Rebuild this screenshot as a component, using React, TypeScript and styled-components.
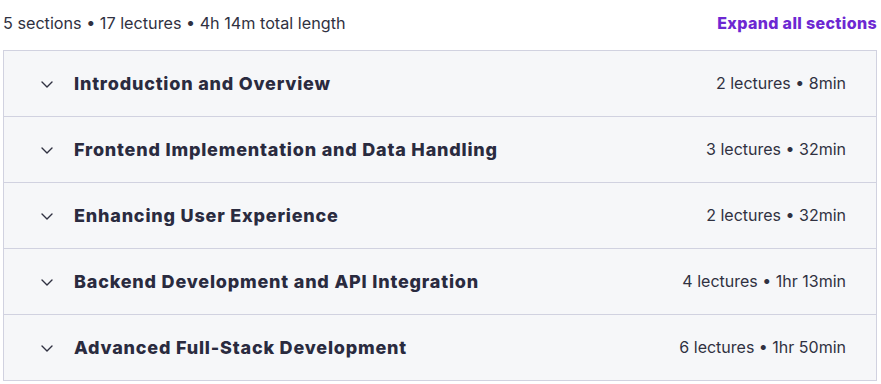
import React from "react";
import styled, { createGlobalStyle } from "styled-components";

const GlobalStyle = createGlobalStyle`
  body {
    margin: 0;
    background: #fff;
    font-family: Inter, "Liberation Sans", sans-serif;
    color: #303141;
  }
`;

const StyledCurriculum = styled.section`
  width: 874px;
  padding: 0 4px 0 3px;

  .curriculum__header {
    height: 50px;
    display: flex;
    justify-content: space-between;
    align-items: center;
    padding-bottom: 4px;
    box-sizing: border-box;
  }

  .curriculum__summary {
    font-size: 16.2px;
    color: #303141;
  }

  .curriculum__expand {
    border: 0;
    background: none;
    padding: 0;
    font-family: inherit;
    font-size: 16px;
    font-weight: 800;
    letter-spacing: 0.35px;
    color: #6d28d2;
    cursor: pointer;
  }

  .curriculum__list {
    border: 1px solid #d1d2e0;
    border-bottom: 0;
  }
`;

const SectionRow = styled.div`
  height: 65px;
  display: flex;
  align-items: center;
  padding: 0 30px 0 36px;
  background: #f6f7f9;
  border-bottom: 1px solid #d1d2e0;

  .section__chevron {
    width: 14px;
    height: 14px;
    margin-right: 20px;
    color: #303141;
  }

  .section__title {
    flex: 1;
    font-size: 18px;
    font-weight: 800;
    letter-spacing: 0.8px;
    color: #2a2b3f;
  }

  .section__meta {
    font-size: 16px;
    color: #303141;
    padding-bottom: 2px;
  }
`;

const sections = [
  { title: "Introduction and Overview", meta: "2 lectures • 8min" },
  { title: "Frontend Implementation and Data Handling", meta: "3 lectures • 32min" },
  { title: "Enhancing User Experience", meta: "2 lectures • 32min" },
  { title: "Backend Development and API Integration", meta: "4 lectures • 1hr 13min" },
  { title: "Advanced Full-Stack Development", meta: "6 lectures • 1hr 50min" },
];

function Chevron() {
  return (
    <svg className="section__chevron" viewBox="0 0 14 14" fill="none">
      <path d="M2 5l5 5 5-5" stroke="currentColor" strokeWidth="1.4" strokeLinecap="round" strokeLinejoin="round" />
    </svg>
  );
}

function App() {
  return (
    <>
      <GlobalStyle />
      <StyledCurriculum className="curriculum">
        <div className="curriculum__header">
          <span className="curriculum__summary">5 sections • 17 lectures • 4h 14m total length</span>
          <button className="curriculum__expand">Expand all sections</button>
        </div>
        <div className="curriculum__list">
          {sections.map((s) => (
            <SectionRow key={s.title}>
              <Chevron />
              <span className="section__title">{s.title}</span>
              <span className="section__meta">{s.meta}</span>
            </SectionRow>
          ))}
        </div>
      </StyledCurriculum>
    </>
  );
}

export default App;
